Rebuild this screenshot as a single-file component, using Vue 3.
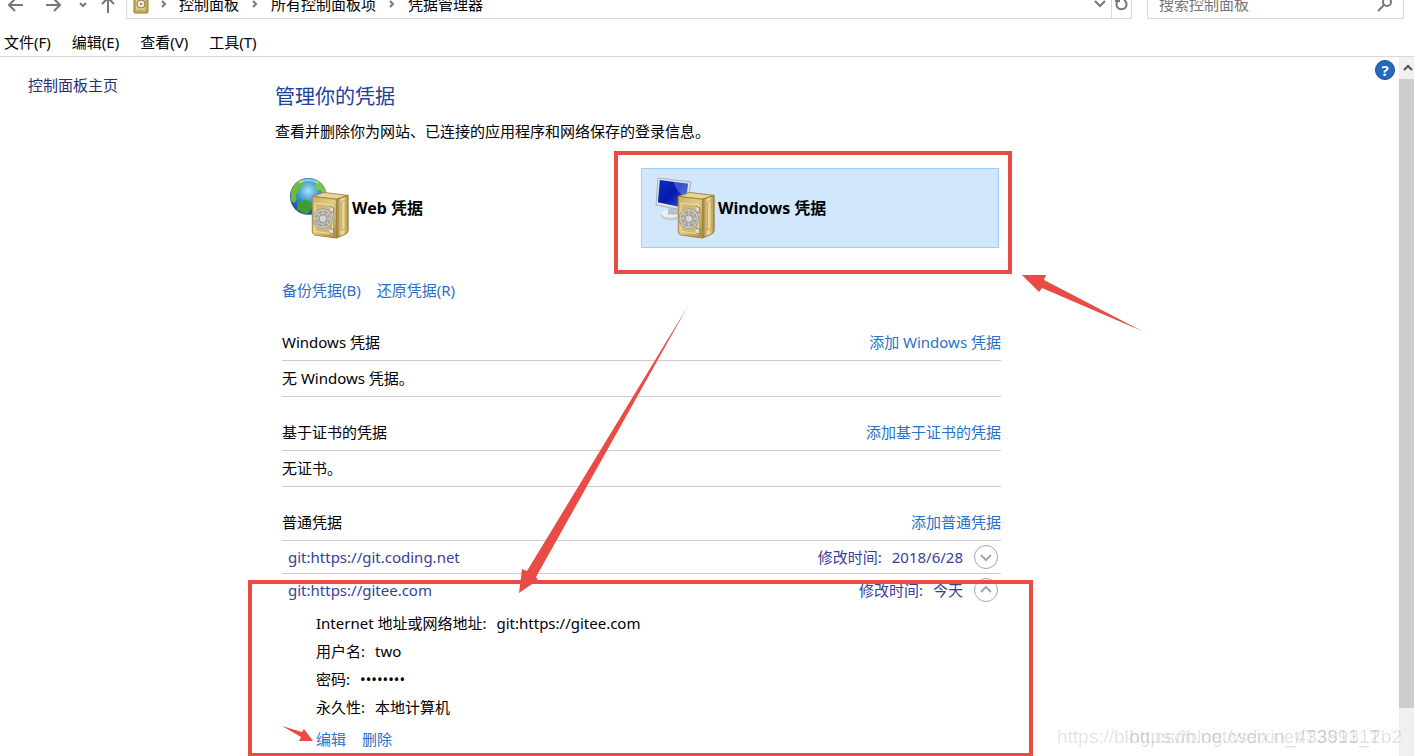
<template>
  <div class="window">
    <header class="nav-bar">
      <div class="nav-buttons">
        <button aria-label="后退"><svg width="16" height="16" viewBox="0 0 16 16"><path d="M15 8H1M7 2L1 8l6 6" /></svg></button>
        <button aria-label="前进"><svg width="16" height="16" viewBox="0 0 16 16"><path d="M1 8h14M9 2l6 6-6 6" /></svg></button>
        <button class="recent" aria-label="最近浏览的位置"><svg width="8" height="8" viewBox="0 0 8 8"><path d="M1 2l3 3 3-3" /></svg></button>
        <button aria-label="上移"><svg width="16" height="16" viewBox="0 0 16 16"><path d="M8 16V1M2 7l6-6 6 6" /></svg></button>
      </div>
      <nav class="address">
        <svg class="safe-icon" width="16" height="20" viewBox="0 0 16 20">
          <rect x="1" y="1" width="14" height="18" rx="1" fill="#c9a85b" stroke="#9a7c37" />
          <rect x="3" y="3" width="9" height="13" fill="#dfc88a" />
          <circle cx="8" cy="10" r="4" fill="#eee8d4" stroke="#8b7c58" />
          <circle cx="8" cy="10" r="1" fill="#77705c" />
        </svg>
        <template v-for="crumb in crumbs" :key="crumb">
          <svg class="crumb-arrow" width="6" height="8" viewBox="0 0 6 8"><path d="M1 1l3 3-3 3" /></svg>
          <a href="#">{{ crumb }}</a>
        </template>
        <button class="history" aria-label="以前的位置"><svg width="12" height="8" viewBox="0 0 12 8"><path d="M1 1l5 5 5-5" /></svg></button>
        <button class="refresh" aria-label="刷新"><svg width="14" height="14" viewBox="0 0 14 14"><path d="M9 3a5 5 0 1 1-5 0M4 0v4H0" /></svg></button>
      </nav>
      <label class="search">
        <input v-model="keyword" type="text" placeholder="搜索控制面板" aria-label="搜索控制面板" />
        <svg width="16" height="16" viewBox="0 0 16 16"><circle cx="10" cy="6" r="4" /><path d="M7 9l-6 6" /></svg>
      </label>
    </header>

    <div class="menu-bar">
      <button v-for="menu in menus" :key="menu">{{ menu }}</button>
    </div>

    <div class="body">
      <aside class="sidebar"><a href="#">控制面板主页</a></aside>

      <main class="content">
        <h1>管理你的凭据</h1>
        <p class="intro">查看并删除你为网站、已连接的应用程序和网络保存的登录信息。</p>

        <div class="vaults">
          <button v-for="vault in vaults" :key="vault.name" class="vault" :class="{ active: vault.name === current }" @click="current = vault.name">
            <svg width="64" height="62" viewBox="0 0 64 64">
              <defs>
                <radialGradient id="globe" cx="50%" cy="35%" r="65%"><stop offset="0" stop-color="#a9e2f6" /><stop offset="0.45" stop-color="#3b9ad2" /><stop offset="1" stop-color="#1c3b9c" /></radialGradient>
                <linearGradient id="screen" x1="0" y1="0" x2="1" y2="1"><stop offset="0" stop-color="#0a2fc9" /><stop offset="0.5" stop-color="#0719a8" /><stop offset="1" stop-color="#3d66de" /></linearGradient>
                <linearGradient id="front" x1="0" y1="0" x2="1" y2="1"><stop offset="0" stop-color="#cdb167" /><stop offset="0.5" stop-color="#e0ca85" /><stop offset="1" stop-color="#ab8a3e" /></linearGradient>
                <linearGradient id="side" x1="0" y1="0" x2="1" y2="0"><stop offset="0" stop-color="#997528" /><stop offset="0.5" stop-color="#f2e3aa" /><stop offset="1" stop-color="#b3923f" /></linearGradient>
              </defs>
              <g v-if="vault.kind === 'web'">
                <circle cx="20" cy="20" r="19" fill="url(#globe)" />
                <path d="M2 16Q4 7 12 3l4 1-2 5-4 2 1 4-4 3 1 5-3 4-3-3z" fill="#6fba37" />
                <path d="M25 2l7 3 6 9 1 8-4-3-2-5-5-1-1-5 2-2z" fill="#7cc63f" />
                <path d="M9 27l7-4 6 3 2 5-4 7-5 0-7-5z" fill="#3f9d31" />
                <path d="M10 6q9-6 20 0" fill="none" stroke="#d5f3fb" stroke-width="2" opacity="0.6" />
              </g>
              <g v-else>
                <ellipse cx="17" cy="40" rx="11" ry="5" fill="#c6ccd4" />
                <ellipse cx="16" cy="38" rx="9" ry="4" fill="#eef1f4" />
                <path d="M14 30h9l1 9H13z" fill="#b9c0ca" />
                <path d="M3 1l34 4-4 30L1 29z" fill="#dbe0e6" stroke="#a9b1bc" />
                <path d="M5 3l29 4-3 25L3 26z" fill="url(#screen)" />
                <path d="M19 5l15 2-2 14q-8-2-13-16z" fill="#8ba8ff" opacity="0.4" />
              </g>
              <path d="M24 20l12-4 25 3-12 4z" fill="#ead798" stroke="#a5853b" />
              <path d="M49 23l12-4v36q0 3-3 4l-9 4z" fill="url(#side)" stroke="#93742d" />
              <path d="M54 26l4-2v29l-4 2z" fill="#e9d697" stroke="#c1a45b" />
              <path d="M24 20l25 3v40l-22-3q-3-1-3-4z" fill="url(#front)" stroke="#a38440" />
              <path d="M27 27l18 2v30l-18-3z" fill="#d3b96f" stroke="#f1e0a9" />
              <path d="M42 30l4 2v5l-3-1M42 53l4 1v5l-4-1" fill="#dedfd9" stroke="#87857b" />
              <circle cx="35" cy="43" r="9" fill="#b7ac8d" stroke="#858582" stroke-width="3" />
              <circle cx="35" cy="43" r="9" fill="none" stroke="#c3c6ca" stroke-width="2" />
              <path d="M35 34v18M26 43h18M29 37l12 12M41 37L29 49" stroke="#d4d7da" stroke-width="1" />
              <circle cx="35" cy="43" r="4" fill="#d1d5da" stroke="#8b9199" />
            </svg>
            <span>{{ vault.name }}</span>
          </button>
        </div>

        <div class="links">
          <a href="#">备份凭据(B)</a>
          <a href="#">还原凭据(R)</a>
        </div>

        <section v-for="group in groups" :key="group.title" class="group">
          <div class="group-head">
            <h2>{{ group.title }}</h2>
            <a href="#">{{ group.add }}</a>
          </div>
          <p v-if="group.empty" class="empty">{{ group.empty }}</p>
          <template v-for="item in group.items" :key="item.name">
            <div class="entry">
              <a href="#">{{ item.name }}</a>
              <span class="modified"><span>修改时间:</span><span>{{ item.modified }}</span></span>
              <button :aria-expanded="item.open" aria-label="详细信息" @click="item.open = !item.open">
                <svg width="26" height="26" viewBox="0 0 26 26"><circle cx="13" cy="13" r="11.5" /><path :d="item.open ? 'M8 15l5-5 5 5' : 'M8 11l5 5 5-5'" /></svg>
              </button>
            </div>
            <div v-if="item.open" class="details">
              <dl>
                <div v-for="field in item.fields" :key="field[0]"><dt>{{ field[0] }}:</dt><dd>{{ field[1] }}</dd></div>
              </dl>
              <div class="actions"><a href="#">编辑</a><a href="#">删除</a></div>
            </div>
          </template>
        </section>
      </main>

      <button class="help" aria-label="帮助">?</button>
      <div class="scrollbar">
        <button aria-label="向上滚动"><svg width="10" height="8" viewBox="0 0 10 8"><path d="M1 6l4-4 4 4" /></svg></button>
        <div class="thumb"></div>
      </div>
    </div>

    <svg class="marks" width="1414" height="756" viewBox="0 0 1414 756">
      <rect x="616" y="153" width="394" height="119" />
      <rect x="250" y="582" width="781" height="173" />
      <path d="M1022 275l24 0-2 5 98 51-100-43-3 4z" />
      <path d="M688 306l-152 271 2 3-19 13 3-24 5 2z" />
      <path d="M282 726l20 6 2-3 9 12-14 0 2-4z" />
    </svg>
    <div class="watermark">
      <span>https://blog.csdn.net/weixin_43391312</span>
      <span>https://blog.csdn.net/T3891_Tb2</span>
    </div>
  </div>
</template>

<script setup>
import { ref } from 'vue'

const keyword = ref('')
const current = ref('Windows 凭据')

const crumbs = ['控制面板', '所有控制面板项', '凭据管理器']
const menus = ['文件(F)', '编辑(E)', '查看(V)', '工具(T)']

const vaults = [
  { name: 'Web 凭据', kind: 'web' },
  { name: 'Windows 凭据', kind: 'windows' }
]

const groups = ref([
  { title: 'Windows 凭据', add: '添加 Windows 凭据', empty: '无 Windows 凭据。' },
  { title: '基于证书的凭据', add: '添加基于证书的凭据', empty: '无证书。' },
  {
    title: '普通凭据',
    add: '添加普通凭据',
    items: [
      { name: 'git:https://git.coding.net', modified: '2018/6/28', open: false },
      {
        name: 'git:https://gitee.com',
        modified: '今天',
        open: true,
        fields: [
          ['Internet 地址或网络地址', 'git:https://gitee.com'],
          ['用户名', 'two'],
          ['密码', '••••••••'],
          ['永久性', '本地计算机']
        ]
      }
    ]
  }
])
</script>

<style>
body {
  margin: 0;
  background: #fff;
}
</style>

<style scoped>
.window {
  position: relative;
  display: flex;
  flex-direction: column;
  height: 100vh;
  margin-right: 12px;
  overflow: hidden;
  font: 15px/20px "Noto Sans", "Noto Sans CJK SC", sans-serif;
  color: #000;
}

button {
  padding: 0;
  border: 0;
  background: none;
  font: inherit;
  color: inherit;
}

a {
  color: #2a6fc9;
  text-decoration: none;
}

svg {
  display: block;
  flex: none;
}

/* address row, its upper part is scrolled out of the window */
.nav-bar {
  display: flex;
  align-items: flex-end;
  flex: none;
  height: 19px;
  overflow: hidden;
}

.nav-bar path,
.nav-bar .search circle {
  fill: none;
  stroke: #777;
  stroke-width: 2;
}

.nav-buttons {
  display: flex;
  align-items: center;
  gap: 21px;
  width: 126px;
  height: 28px;
  padding-left: 8px;
  box-sizing: border-box;
}

.nav-buttons .recent {
  margin: 0 -8px 0 -3px;
}

.address,
.search {
  display: flex;
  align-items: center;
  box-sizing: border-box;
  height: 30px;
  border: 1px solid #d9d9d9;
}

.address {
  flex: 1;
  padding-left: 6px;
}

.address a {
  color: #000;
}

.crumb-arrow {
  margin: 0 13px;
}

.safe-icon + .crumb-arrow {
  margin: 0 12px;
}

.history {
  margin-left: auto;
  padding-right: 5px;
}

.refresh {
  display: flex;
  align-items: center;
  justify-content: center;
  width: 20px;
  height: 28px;
  border-left: 1px solid #d9d9d9;
}

.search {
  width: 257px;
  margin: 0 10px 0 15px;
  padding: 0 10px 0 11px;
}

.search input {
  flex: 1;
  min-width: 0;
  padding: 0;
  border: 0;
  outline: 0;
  background: none;
  font: inherit;
}

.search input::placeholder {
  color: #757575;
}

.menu-bar {
  display: flex;
  flex: none;
  gap: 21px;
  height: 38px;
  padding: 7px 4px 0;
  box-sizing: border-box;
  border-bottom: 1px solid #d9d9d9;
}

.menu-bar button {
  height: 32px;
  line-height: 32px;
}

.body {
  display: flex;
  flex: 1;
  min-height: 0;
}

.sidebar {
  flex: none;
  width: 275px;
  padding: 18px 0 0 28px;
  box-sizing: border-box;
}

.sidebar a {
  color: #252f72;
}

.content {
  flex: 1;
  max-width: 726px;
  padding-top: 26px;
}

h1 {
  margin: 0;
  font-size: 20px;
  font-weight: 400;
  line-height: 28px;
  color: #213f9b;
}

.intro {
  margin: 10px 0 27px;
}

.vaults {
  display: grid;
  grid-template-columns: 1fr 1fr;
  gap: 8px;
  padding-right: 2px;
}

.vault {
  display: flex;
  align-items: center;
  padding: 8px 12px;
  border: 1px solid transparent;
  font-size: 16px;
  font-weight: 700;
}

.vault.active {
  border-color: #99d1ff;
  background: #d1e8fc;
}

.links {
  display: flex;
  gap: 16px;
  padding: 32px 7px 0;
}

.group {
  margin: 32px 0 25px 7px;
}

.group + .group {
  margin-top: 0;
}

.group-head,
.empty {
  box-sizing: border-box;
  border-bottom: 1px solid #ccc;
}

.group-head {
  display: flex;
  justify-content: space-between;
  height: 29px;
}

h2 {
  margin: 0;
  font: inherit;
}

.empty {
  height: 36px;
  margin: 0;
  padding-top: 7px;
}

.entry {
  display: flex;
  align-items: center;
  height: 32px;
  padding: 0 2px 0 6px;
}

.details + .entry,
.entry + .entry {
  border-top: 1px solid #ccc;
}

.entry a,
.modified {
  color: #36419a;
}

.modified {
  display: flex;
  gap: 10px;
  margin-left: auto;
  margin-right: 10px;
}

.entry svg {
  fill: none;
  stroke: #a6a6a6;
  stroke-width: 2;
}

.entry circle {
  stroke-width: 1;
}

.details {
  padding: 3px 0 0 34px;
}

dl {
  margin: 0;
}

dl div {
  display: flex;
  gap: 10px;
  height: 28px;
  align-items: center;
}

dd {
  margin: 0;
}

.actions {
  display: flex;
  gap: 16px;
  padding-top: 8px;
}

.help {
  width: 20px;
  height: 20px;
  margin: 3px 4px 0 auto;
  border: 1px solid #1c4b8f;
  border-radius: 50%;
  background: #2569c3;
  color: #fff;
  font-weight: 700;
  line-height: 18px;
}

.scrollbar {
  display: flex;
  flex-direction: column;
  flex: none;
  width: 15px;
  background: #f0f0f0;
}

.scrollbar button {
  display: flex;
  align-items: center;
  justify-content: center;
  height: 22px;
  padding-left: 3px;
}

.scrollbar path {
  fill: none;
  stroke: #505050;
  stroke-width: 2;
}

.thumb {
  height: 90%;
  background: #cdcdcd;
}

/* red pen marks drawn over the page */
.marks {
  position: absolute;
  top: 0;
  left: 0;
  pointer-events: none;
}

.marks rect {
  fill: none;
  stroke: #e84c45;
  stroke-width: 4;
}

.marks path {
  fill: #e84c45;
}

.watermark {
  position: absolute;
  right: 12px;
  bottom: 7px;
  display: grid;
  width: 345px;
  pointer-events: none;
  color: rgba(0, 0, 0, 0.12);
  font: 19px/24px "Liberation Sans", sans-serif;
  white-space: nowrap;
}

.watermark span {
  grid-area: 1 / 1;
}

.watermark span + span {
  text-align: right;
}
</style>
